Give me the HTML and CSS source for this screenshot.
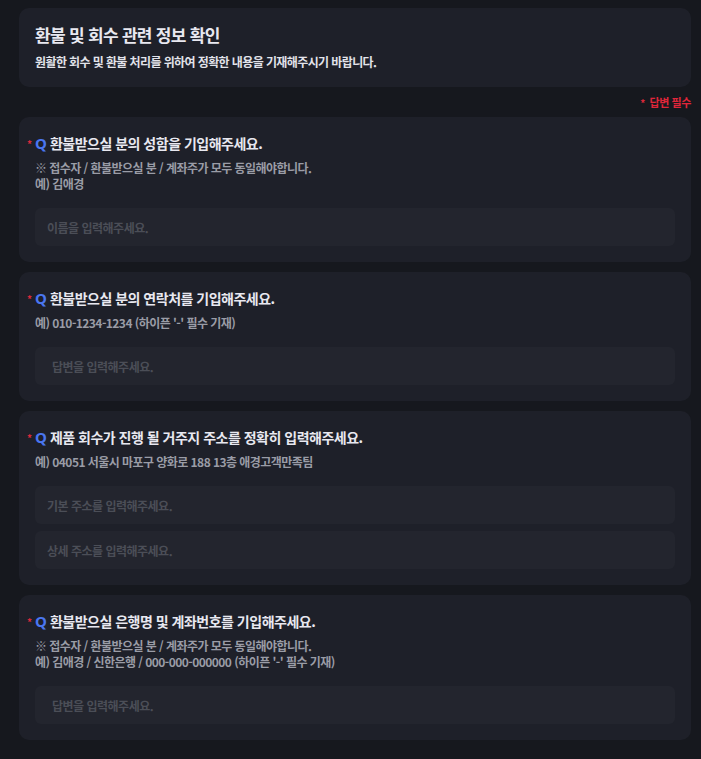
FILE: index.html
```html
<!DOCTYPE html>
<html lang="ko">
<head>
<meta charset="utf-8">
<link rel="stylesheet" href="styles.css">
</head>
<body>
<main class="page">
  <section class="head-card">
    <h1 class="head-title">환불 및 회수 관련 정보 확인</h1>
    <p class="head-sub">원활한 회수 및 환불 처리를 위하여 정확한 내용을 기재해주시기 바랍니다.</p>
  </section>
  <div class="req-row"><span class="req-star">*</span><span class="req-text">답변 필수</span></div>
  <section class="card">
    <h2 class="q-title"><span class="star">*</span><span class="q">Q</span><span>환불받으실 분의 성함을 기입해주세요.</span></h2>
    <p class="q-desc">※ 접수자 / 환불받으실 분 / 계좌주가 모두 동일해야합니다.<br>예) 김애경</p>
    <input class="field" type="text" placeholder="이름을 입력해주세요.">
  </section>
  <section class="card">
    <h2 class="q-title"><span class="star">*</span><span class="q">Q</span><span>환불받으실 분의 연락처를 기입해주세요.</span></h2>
    <p class="q-desc">예) 010-1234-1234 (하이픈 '-' 필수 기재)</p>
    <input class="field field-wide" type="text" placeholder="답변을 입력해주세요.">
  </section>
  <section class="card">
    <h2 class="q-title"><span class="star">*</span><span class="q">Q</span><span>제품 회수가 진행 될 거주지 주소를 정확히 입력해주세요.</span></h2>
    <p class="q-desc">예) 04051 서울시 마포구 양화로 188 13층 애경고객만족팀</p>
    <div class="fields">
      <input class="field" type="text" placeholder="기본 주소를 입력해주세요.">
      <input class="field" type="text" placeholder="상세 주소를 입력해주세요.">
    </div>
  </section>
  <section class="card">
    <h2 class="q-title"><span class="star">*</span><span class="q">Q</span><span>환불받으실 은행명 및 계좌번호를 기입해주세요.</span></h2>
    <p class="q-desc">※ 접수자 / 환불받으실 분 / 계좌주가 모두 동일해야합니다.<br>예) 김애경 / 신한은행 / 000-000-000000 (하이픈 '-' 필수 기재)</p>
    <input class="field field-wide" type="text" placeholder="답변을 입력해주세요.">
  </section>
</main>
</body>
</html>
```

FILE: styles.css
```css
html, body {
  margin: 0;
  padding: 0;
  background: #16181e;
}
body {
  font-family: "Noto Sans CJK KR", "Noto Sans", sans-serif;
  color: #e6e7ee;
}
.page {
  display: flex;
  flex-direction: column;
  padding: 8px 10px 18px 19px;
}
.head-card {
  background: #1e2029;
  border-radius: 10px;
  padding: 15px 16px 17px;
}
.head-title {
  margin: 0;
  font-size: 17px;
  line-height: 24px;
  font-weight: 700;
  letter-spacing: -0.7px;
  color: #e8e8f0;
}
.head-sub {
  margin: 7px 0 0;
  font-size: 12px;
  line-height: 16px;
  font-weight: 700;
  letter-spacing: -0.6px;
  color: #e2e3ea;
}
.req-row {
  height: 30px;
  display: flex;
  align-items: center;
  justify-content: flex-end;
  gap: 4px;
}
.req-star {
  color: #d8283a;
  font-size: 10px;
  font-weight: 700;
}
.req-text {
  color: #e0263a;
  font-size: 11px;
  font-weight: 700;
  letter-spacing: -0.4px;
}
.card {
  background: #1e2029;
  border-radius: 10px;
  padding: 16px;
  margin-bottom: 10px;
  display: flex;
  flex-direction: column;
}
.q-title {
  margin: 0 0 0 -8px;
  display: flex;
  align-items: center;
  font-size: 14px;
  line-height: 20px;
  font-weight: 700;
  letter-spacing: -0.5px;
  color: #e8e8f0;
}
.star {
  width: 8px;
  color: #d8283a;
  font-size: 10px;
  line-height: 10px;
  padding-top: 2px;
}
.q {
  color: #4a76f0;
  font-family: "Noto Sans", sans-serif;
  font-size: 15px;
  margin-right: 3px;
  letter-spacing: 0;
}
.q-desc {
  margin: 7px 0 0;
  font-size: 12px;
  line-height: 16px;
  font-weight: 700;
  letter-spacing: -0.55px;
  color: #9a9ca6;
}
.fields {
  display: flex;
  flex-direction: column;
  gap: 7px;
  margin-top: 16px;
}
.fields .field {
  margin-top: 0;
}
.field {
  display: block;
  margin-top: 16px;
  height: 38px;
  box-sizing: border-box;
  border: none;
  outline: none;
  border-radius: 6px;
  background: #23252e;
  padding: 0 12px;
  font-family: "Noto Sans CJK KR", "Noto Sans", sans-serif;
  font-size: 12px;
  font-weight: 700;
  letter-spacing: -0.5px;
  color: #e6e7ee;
  width: 100%;
}
.field-wide {
  padding-left: 17px;
}
.field::placeholder {
  color: #4b4e57;
}
```
